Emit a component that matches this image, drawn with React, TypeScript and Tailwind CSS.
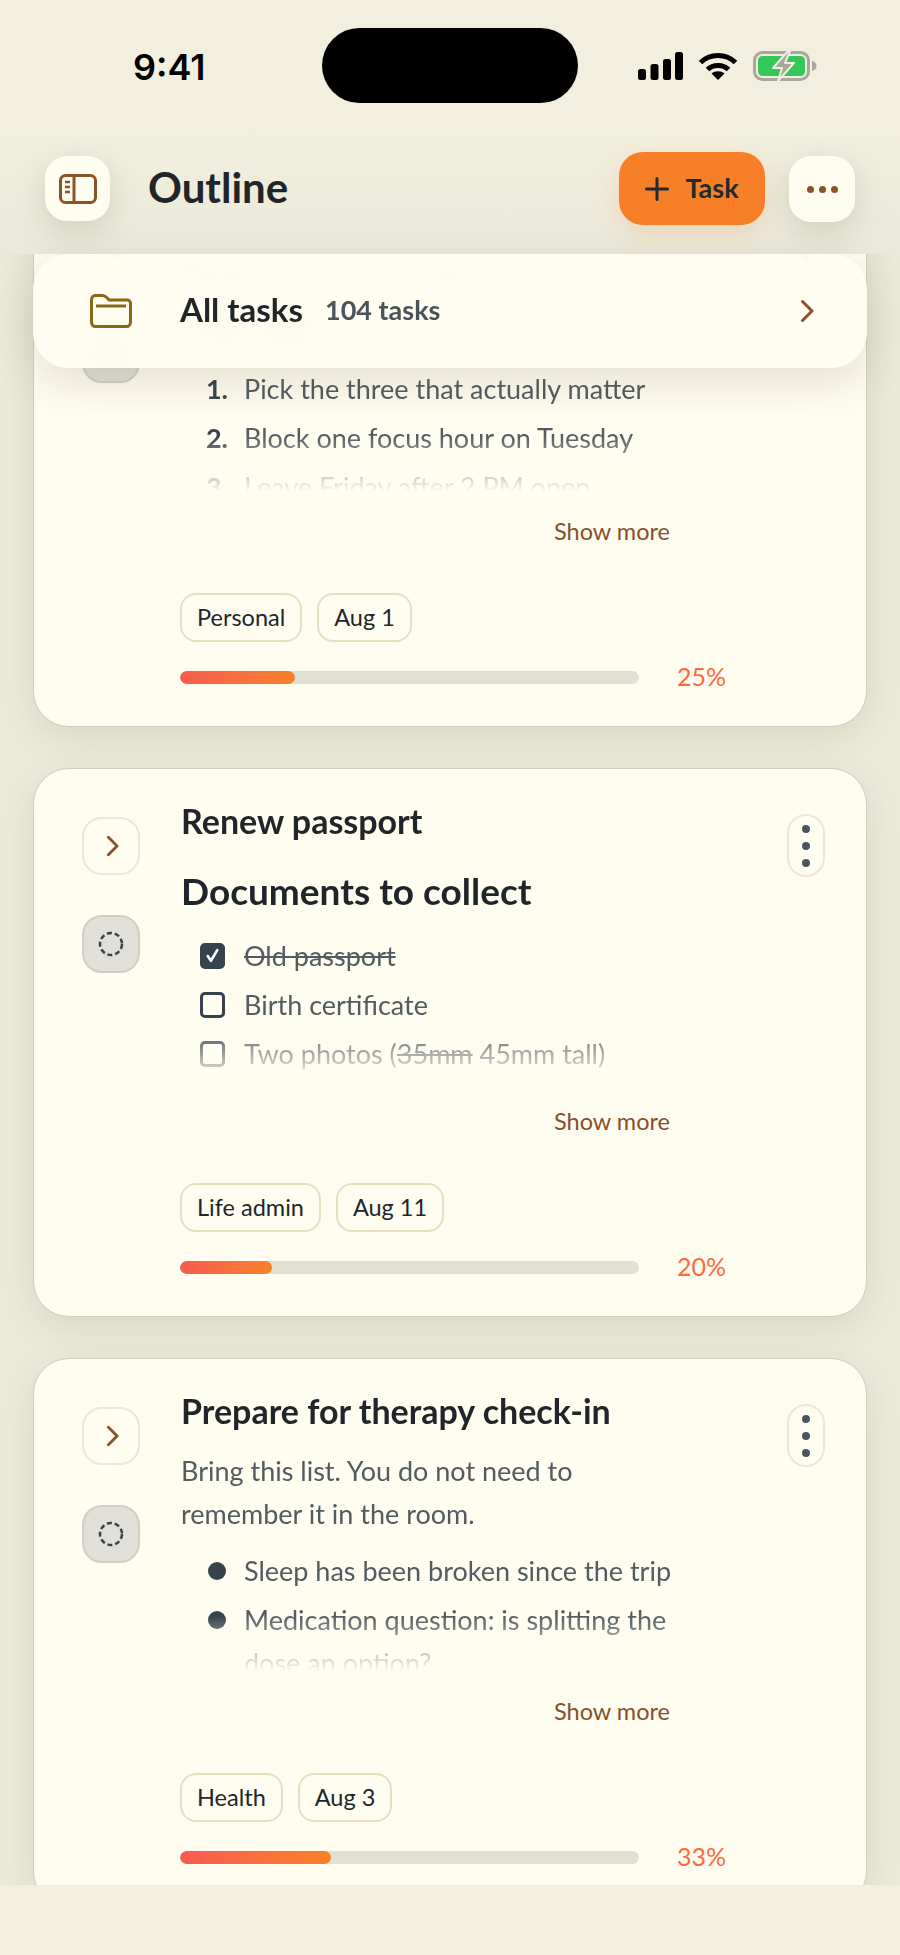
import type {ReactNode} from 'react';

const BROWN = '#8a5229';

function Chevron({className}: {className: string}) {
  return (
    <svg viewBox="0 0 14 24" className={className} fill="none" stroke={BROWN} strokeWidth="3" strokeLinecap="round" strokeLinejoin="round">
      <path d="M2.5 2.5 12 12l-9.5 9.5" />
    </svg>
  );
}

function StatusIcons() {
  return (
    <div className="flex items-center">
      <svg viewBox="0 0 45 28" className="h-[28px] w-[45px]" fill="#000">
        <rect x="0" y="17" width="8" height="11" rx="2.5" />
        <rect x="12.5" y="12" width="8" height="16" rx="2.5" />
        <rect x="25" y="7" width="8" height="21" rx="2.5" />
        <rect x="37" y="0" width="8" height="28" rx="2.5" />
      </svg>
      <svg viewBox="0 0 40 28" className="ml-[15px] h-[28px] w-[40px]" fill="none">
        <path d="M2.5 10.5C12 1 28 1 37.5 10.5" stroke="#000" strokeWidth="5" />
        <path d="M9.5 17.5C15 12 25 12 30.5 17.5" stroke="#000" strokeWidth="5" />
        <path d="M13.5 21.5C17 18.5 23 18.5 26.5 21.5L20 28Z" fill="#000" />
      </svg>
      <svg viewBox="0 0 64 30" className="ml-[15px] h-[30px] w-[64px]" fill="none">
        <rect x="1.5" y="1.5" width="54" height="27" rx="8" stroke="#a9a79b" strokeWidth="3" />
        <rect x="5" y="5" width="47" height="20" rx="4.5" fill="#34c759" />
        <path d="M59 10c3 .5 4.500 2.500 4.500 5s-1.500 4.500-4.500 5z" fill="#a9a79b" />
        <path d="M35 0 20 17h9l-4 13 16-18h-9l5-12z" fill="#a9a79b" stroke="#f2efde" strokeWidth="2" strokeLinejoin="round" />
      </svg>
    </div>
  );
}

function SidebarIcon() {
  return (
    <svg viewBox="0 0 38 30" className="h-[30px] w-[38px]" fill="none" stroke={BROWN} strokeWidth="3">
      <rect x="1.5" y="1.500" width="35" height="27" rx="5" />
      <path d="M15 1.500v27" />
      <path d="M6 8h5M6 13h5M6 18h5" strokeWidth="2.500" />
    </svg>
  );
}

function FolderIcon() {
  return (
    <svg viewBox="0 0 42 34" className="h-[34px] w-[42px]" fill="none" stroke="#8a6716" strokeWidth="3" strokeLinejoin="round">
      <path d="M1.500 6c0-2.500 1.500-4.500 4-4.500h7c2 0 3 .8 4.500 2.300L19 6h18c2 0 3.500 1.500 3.500 3.500V28c0 2.500-1.500 4.500-4 4.500h-31c-2.500 0-4-2-4-4.500z" />
      <path d="M6 12h30" />
    </svg>
  );
}

function Chip({children}: {children: ReactNode}) {
  return (
    <span className="flex h-[49px] items-center rounded-[16px] border-2 border-[#e7e0c0] px-[15px] text-[23.5px] text-[#20272c]">
      {children}
    </span>
  );
}

function Check({checked}: {checked?: boolean}) {
  return (
    <span
      className={`mr-[19px] ml-[19px] flex h-[26px] w-[25px] shrink-0 items-center justify-center rounded-[5px] border-[3px] border-[#36434c] ${checked ? 'bg-[#36434c]' : ''}`}
    >
      {checked && (
        <svg viewBox="0 0 16 16" className="h-[17px] w-[17px]" fill="none" stroke="#fff" strokeWidth="2.500" strokeLinecap="round" strokeLinejoin="round">
          <path d="M3.500 8.500 6.500 13 12.500 3" />
        </svg>
      )}
    </span>
  );
}

function Row({marker, children}: {marker: ReactNode; children: ReactNode}) {
  return (
    <li className="flex items-start leading-[43px]">
      <span className="flex h-[43px] shrink-0 items-center">{marker}</span>
      <span>{children}</span>
    </li>
  );
}

function Num({n}: {n: number}) {
  return <span className="mr-[16px] w-[47px] text-right font-bold text-[#36434c]">{n}.</span>;
}

function Dot() {
  return (
    <span className="mr-[18px] ml-[27px] h-[18px] w-[18px] rounded-full bg-[#36434c]" />
  );
}

function Card({
  body,
  chips,
  pct,
}: {
  body: ReactNode;
  chips: string[];
  pct: number;
}) {
  return (
    <article className="flex h-[549px] shrink-0 rounded-[36px] border border-[#cfcfbc] bg-[#fffcf0] pt-[48px] pl-[48px] shadow-[0_10px_36px_rgba(90,85,50,0.13)]">
      <div className="flex w-[58px] shrink-0 flex-col gap-[40px]">
        <button className="flex h-[58px] w-[58px] items-center justify-center rounded-[20px] border-2 border-[#e9e8da]">
          <Chevron className="ml-[3px] h-[22px] w-[13px]" />
        </button>
        <button className="flex h-[58px] w-[58px] items-center justify-center rounded-[20px] border-2 border-[#cfcfc4] bg-[#e0dfd8]">
          <svg viewBox="0 0 26 26" className="h-[26px] w-[26px]" fill="none" stroke="#36434c" strokeWidth="2.500" strokeDasharray="5 2.900">
            <circle cx="13" cy="13" r="11" />
          </svg>
        </button>
      </div>
      <div className="mt-[-17px] ml-[40px] w-[560px]">
        <div className="h-[282px] w-[510px] overflow-hidden pl-px text-[27px] text-[#525b61] [mask-image:linear-gradient(to_bottom,black_80%,transparent_100%)]">
          {body}
        </div>
        <div className="mt-[27px] w-[490px] text-right text-[23.5px] leading-[24px] text-[#86502a]">Show more</div>
        <div className="mt-[50px] flex gap-[15px]">
          {chips.map((c) => (
            <Chip key={c}>{c}</Chip>
          ))}
        </div>
        <div className="mt-[22px] flex items-center gap-[38px]">
          <div className="h-[13px] w-[459px] overflow-hidden rounded-full bg-[#e0e0d3]">
            <div
              className="h-full rounded-full bg-gradient-to-r from-[#f95a50] to-[#f98026]"
              style={{width: `${pct}%`}}
            />
          </div>
          <span className="mt-[-2px] text-[25px] leading-[28px] text-[#fd6b3c]">{pct}%</span>
        </div>
      </div>
      <button className="mt-[-3px] ml-[47px] flex h-[63px] w-[38px] flex-col items-center justify-center gap-[9px] rounded-[19px] border-2 border-[#e9e8da]">
        <span className="h-[8px] w-[8px] rounded-full bg-[#4a565e]" />
        <span className="h-[8px] w-[8px] rounded-full bg-[#4a565e]" />
        <span className="h-[8px] w-[8px] rounded-full bg-[#4a565e]" />
      </button>
    </article>
  );
}

function Title({children}: {children: ReactNode}) {
  return <h3 className="text-[34px] leading-[42px] font-bold text-[#1f2529]">{children}</h3>;
}

export default function App() {
  return (
    <div className="relative h-[1955px] w-[900px] overflow-hidden bg-[#f2efde] font-[Lato,sans-serif]">
      <div className="relative h-[127px]">
        <div className="flex h-[127px] items-center pt-[4px] pr-[83px] pl-[133px]">
          <span className="mt-[3px] w-[189px] font-[Inter,sans-serif] text-[36px] font-semibold text-black">9:41</span>
          <div className="h-[75px] w-[256px] rounded-full bg-black" />
          <div className="ml-auto"><StatusIcons /></div>
        </div>
      </div>

      <header className="flex h-[127px] items-start bg-gradient-to-b from-[#f2efde] to-[#ebe9d9] pt-[29px] pr-[45px] pl-[45px]">
        <button className="flex h-[65px] w-[65px] items-center justify-center rounded-[22px] bg-[#fffcf0] shadow-[0_10px_30px_rgba(90,85,50,0.18)]">
          <SidebarIcon />
        </button>
        <h1 className="mt-[8px] ml-[38px] text-[42px] leading-[46px] font-bold text-[#1f2529]">Outline</h1>
        <button className="mt-[-4px] ml-auto flex h-[73px] w-[146px] items-center justify-center gap-[16px] rounded-[24px] bg-[#f77f27] text-[27px] font-bold text-[#1f2a33] shadow-[0_8px_24px_rgba(240,130,50,0.18)]">
          <svg viewBox="0 0 24 24" className="h-[24px] w-[24px]" fill="none" stroke="#1f2a33" strokeWidth="3" strokeLinecap="round">
            <path d="M12 1.500v21M1.500 12h21" />
          </svg>
          Task
        </button>
        <button className="ml-[24px] flex h-[66px] w-[66px] items-center justify-center gap-[5px] rounded-[22px] bg-[#fffcf0] shadow-[0_10px_30px_rgba(90,85,50,0.18)]">
          <span className="h-[7px] w-[7px] rounded-full bg-[#8a5229]" />
          <span className="h-[7px] w-[7px] rounded-full bg-[#8a5229]" />
          <span className="h-[7px] w-[7px] rounded-full bg-[#8a5229]" />
        </button>
      </header>

      <div className="relative">
        <main className="h-[1631px] overflow-hidden bg-[#ecead9]">
          <div className="mt-[-76px] flex flex-col gap-[41px] px-[33px]">
            <Card
              chips={['Personal', 'Aug 1']}
              pct={25}
              body={
                <>
                  <Title>Plan the week before it gets away</Title>
                  <p className="mt-[6px] leading-[36px]">Things you have enough time for</p>
                  <p className="mt-[8px] leading-[24px]">Friday night<br />Leave room</p>
                  <ol className="mt-[17px] flex flex-col gap-[6px]">
                    <Row marker={<Num n={1} />}>Pick the three that actually matter</Row>
                    <Row marker={<Num n={2} />}>Block one focus hour on Tuesday</Row>
                    <Row marker={<Num n={3} />}>Leave Friday after 2 PM open</Row>
                  </ol>
                </>
              }
            />
            <Card
              chips={['Life admin', 'Aug 11']}
              pct={20}
              body={
                <>
                  <Title>Renew passport</Title>
                  <h4 className="mt-[26px] text-[37px] leading-[46px] font-bold text-[#1f2529]">Documents to collect</h4>
                  <ul className="mt-[20px] flex flex-col gap-[6px]">
                    <Row marker={<Check checked />}><s>Old passport</s></Row>
                    <Row marker={<Check />}>Birth certificate</Row>
                    <Row marker={<Check />}>Two photos (<s>35mm</s> 45mm tall)</Row>
                  </ul>
                </>
              }
            />
            <Card
              chips={['Health', 'Aug 3']}
              pct={33}
              body={
                <>
                  <Title>Prepare for therapy check-in</Title>
                  <p className="mt-[17px] leading-[43px]">Bring this list. You do not need to remember it in the room.</p>
                  <ul className="mt-[14px] flex flex-col gap-[6px]">
                    <Row marker={<Dot />}>Sleep has been broken since the trip</Row>
                    <Row marker={<Dot />}>Medication question: is splitting the dose an option?</Row>
                  </ul>
                </>
              }
            />
          </div>
        </main>

        <div className="absolute top-0 left-[33px] flex h-[114px] w-[834px] items-center rounded-[36px] bg-[#fffcf0]/95 pr-[53px] pl-[57px] shadow-[0_14px_44px_rgba(90,85,50,0.16)] backdrop-blur-md">
          <FolderIcon />
          <span className="mt-[-2px] ml-[48px] text-[33px] font-bold text-[#1f2529]">All tasks</span>
          <span className="mt-[-2px] ml-[22px] text-[27px] font-bold text-[#4a535a]">104 tasks</span>
          <Chevron className="ml-auto h-[24px] w-[14px]" />
        </div>
      </div>
    </div>
  );
}
